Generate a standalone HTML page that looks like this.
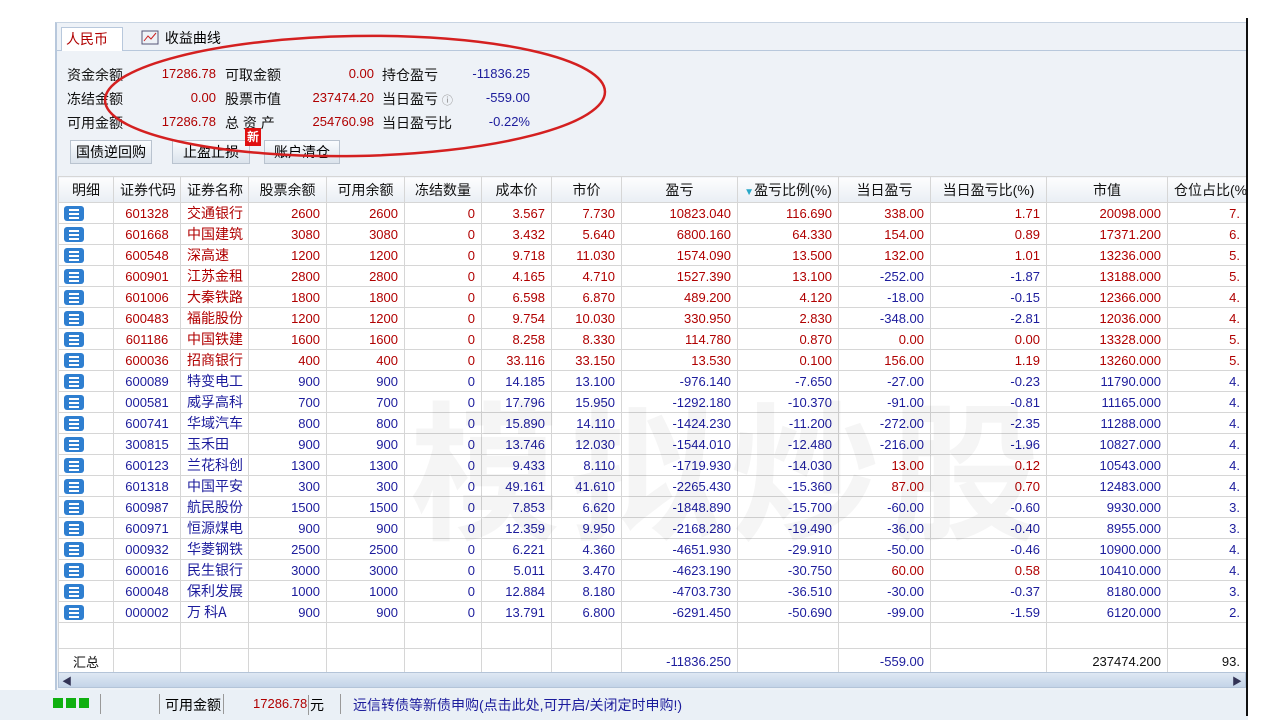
<!DOCTYPE html>
<html><head><meta charset="utf-8"><style>
*{margin:0;padding:0;box-sizing:border-box}
body{width:1280px;height:720px;background:#fff;position:relative;overflow:hidden;font-family:"Liberation Sans","Noto Sans CJK SC",sans-serif;font-size:13px}
#win{position:absolute;left:55px;top:22px;width:1192px;height:698px;background:#eef2f7;border-left:2px solid #b8c8dc;border-top:1px solid #c8d4e2}
#edge{position:absolute;left:1246px;top:18px;width:2px;height:698px;background:#111;z-index:5}
.tab{position:absolute;top:4px;height:24px;font-size:14px}
#tabs{position:absolute;left:0;top:0;width:1190px;height:28px;border-bottom:1px solid #b8c8dc}
.info{position:absolute;font-size:14px;color:#111}
.num{font-family:"Liberation Sans",sans-serif;font-size:13px;text-align:right}
.r{color:#b00000}.b{color:#1c1c9c}
.btn{position:absolute;height:24px;border:1px solid #b9c3cf;background:linear-gradient(#fafcfe,#dbe3ec);font-size:14px;text-align:center;line-height:22px}
table{position:absolute;left:58px;top:176px;border-collapse:collapse;table-layout:fixed;background:#fff;font-size:13px;width:1188px}
td,th{border:1px solid #d6d6d6;height:21px;padding:0 6px;white-space:nowrap;overflow:hidden;text-align:right;font-family:"Liberation Sans","Noto Sans CJK SC",sans-serif;font-size:13px}
th{height:26px;background:linear-gradient(#fdfdfe,#e9eef4);font-weight:normal;text-align:center;font-size:14px;color:#111}
td.c{text-align:center}td.n{text-align:left;font-family:"Noto Sans CJK SC",sans-serif;font-size:14px}
.ic{display:inline-block;width:20px;height:15px;background:#2f7fd0;border-radius:3px;vertical-align:middle;position:relative}
.ic:after{content:"";position:absolute;left:5px;top:3px;width:10px;height:2px;background:#fff;box-shadow:0 4px 0 #fff,0 8px 0 #fff}
td:first-child{text-align:left;padding-left:5px}
#wm{position:absolute;left:410px;top:355px;font-size:150px;color:rgba(0,0,0,0.04);font-family:"Noto Sans CJK SC",sans-serif;font-weight:bold;letter-spacing:10px}
#scroll{position:absolute;left:58px;top:672px;width:1188px;height:16px;background:linear-gradient(#dfe8f3,#c4d4e8);border:1px solid #b4c4d8}
#status{position:absolute;left:0;top:690px;width:1248px;height:30px;background:#eaf0f6;font-size:14px}
</style></head><body>
<div id="win">
 <div id="tabs"></div>
 <div class="tab r" style="left:4px;width:62px;border:1px solid #b8c8dc;border-bottom:none;background:#fff;padding-left:4px;line-height:22px">人民币</div>
 <div class="tab" style="left:84px;line-height:22px"><svg width="20" height="16" style="vertical-align:-3px"><rect x="1" y="1" width="16" height="13" fill="none" stroke="#557" /><path d="M3 11 L7 6 L10 9 L15 3" stroke="#c22" fill="none"/></svg> 收益曲线</div>
</div>
<div id="edge"></div>
<div class="info" style="left:67px;top:65px">资金余额</div><div class="info r num" style="left:150px;top:66px;width:66px">17286.78</div>
<div class="info" style="left:225px;top:65px">可取金额</div><div class="info r num" style="left:300px;top:66px;width:74px">0.00</div>
<div class="info" style="left:382px;top:65px">持仓盈亏</div><div class="info b num" style="left:450px;top:66px;width:80px">-11836.25</div>
<div class="info" style="left:67px;top:89px">冻结金额</div><div class="info r num" style="left:150px;top:90px;width:66px">0.00</div>
<div class="info" style="left:225px;top:89px">股票市值</div><div class="info r num" style="left:300px;top:90px;width:74px">237474.20</div>
<div class="info" style="left:382px;top:89px">当日盈亏 <span style="font-size:11px;color:#888">ⓘ</span></div><div class="info b num" style="left:450px;top:90px;width:80px">-559.00</div>
<div class="info" style="left:67px;top:113px">可用金额</div><div class="info r num" style="left:150px;top:114px;width:66px">17286.78</div>
<div class="info" style="left:225px;top:113px">总 资 产</div><div class="info r num" style="left:300px;top:114px;width:74px">254760.98</div>
<div class="info" style="left:382px;top:113px">当日盈亏比</div><div class="info b num" style="left:450px;top:114px;width:80px">-0.22%</div>
<div class="btn" style="left:70px;width:82px;top:140px">国债逆回购</div>
<div class="btn" style="left:172px;width:78px;top:140px">止盈止损</div>
<div class="btn" style="left:264px;width:76px;top:140px">账户清仓</div>
<div style="position:absolute;left:245px;top:128px;width:16px;height:18px;background:#e01010;color:#fff;font-size:12px;font-weight:bold;text-align:center;line-height:18px">新</div>
<svg style="position:absolute;left:0;top:0" width="1280" height="720"><ellipse cx="355" cy="96" rx="250" ry="60" fill="none" stroke="#d42020" stroke-width="2.5" transform="rotate(-1 355 96)"/></svg>
<table>
<colgroup><col style="width:55px"><col style="width:67px"><col style="width:68px"><col style="width:78px"><col style="width:78px"><col style="width:77px"><col style="width:70px"><col style="width:70px"><col style="width:116px"><col style="width:101px"><col style="width:92px"><col style="width:116px"><col style="width:121px"><col style="width:79px"></colgroup>
<tr><th>明细</th><th>证券代码</th><th>证券名称</th><th>股票余额</th><th>可用余额</th><th>冻结数量</th><th>成本价</th><th>市价</th><th>盈亏</th><th><span style="color:#2aa8c8;font-size:10px">▼</span>盈亏比例(%)</th><th>当日盈亏</th><th>当日盈亏比(%)</th><th>市值</th><th style="text-align:left">仓位占比(%</th></tr>
<tr class="r"><td><span class="ic"></span></td><td class="c">601328</td><td class="n">交通银行</td><td>2600</td><td>2600</td><td>0</td><td>3.567</td><td>7.730</td><td>10823.040</td><td>116.690</td><td>338.00</td><td>1.71</td><td>20098.000</td><td>7.</td></tr>
<tr class="r"><td><span class="ic"></span></td><td class="c">601668</td><td class="n">中国建筑</td><td>3080</td><td>3080</td><td>0</td><td>3.432</td><td>5.640</td><td>6800.160</td><td>64.330</td><td>154.00</td><td>0.89</td><td>17371.200</td><td>6.</td></tr>
<tr class="r"><td><span class="ic"></span></td><td class="c">600548</td><td class="n">深高速</td><td>1200</td><td>1200</td><td>0</td><td>9.718</td><td>11.030</td><td>1574.090</td><td>13.500</td><td>132.00</td><td>1.01</td><td>13236.000</td><td>5.</td></tr>
<tr class="r"><td><span class="ic"></span></td><td class="c">600901</td><td class="n">江苏金租</td><td>2800</td><td>2800</td><td>0</td><td>4.165</td><td>4.710</td><td>1527.390</td><td>13.100</td><td class="b">-252.00</td><td class="b">-1.87</td><td>13188.000</td><td>5.</td></tr>
<tr class="r"><td><span class="ic"></span></td><td class="c">601006</td><td class="n">大秦铁路</td><td>1800</td><td>1800</td><td>0</td><td>6.598</td><td>6.870</td><td>489.200</td><td>4.120</td><td class="b">-18.00</td><td class="b">-0.15</td><td>12366.000</td><td>4.</td></tr>
<tr class="r"><td><span class="ic"></span></td><td class="c">600483</td><td class="n">福能股份</td><td>1200</td><td>1200</td><td>0</td><td>9.754</td><td>10.030</td><td>330.950</td><td>2.830</td><td class="b">-348.00</td><td class="b">-2.81</td><td>12036.000</td><td>4.</td></tr>
<tr class="r"><td><span class="ic"></span></td><td class="c">601186</td><td class="n">中国铁建</td><td>1600</td><td>1600</td><td>0</td><td>8.258</td><td>8.330</td><td>114.780</td><td>0.870</td><td>0.00</td><td>0.00</td><td>13328.000</td><td>5.</td></tr>
<tr class="r"><td><span class="ic"></span></td><td class="c">600036</td><td class="n">招商银行</td><td>400</td><td>400</td><td>0</td><td>33.116</td><td>33.150</td><td>13.530</td><td>0.100</td><td>156.00</td><td>1.19</td><td>13260.000</td><td>5.</td></tr>
<tr class="b"><td><span class="ic"></span></td><td class="c">600089</td><td class="n">特变电工</td><td>900</td><td>900</td><td>0</td><td>14.185</td><td>13.100</td><td>-976.140</td><td>-7.650</td><td>-27.00</td><td>-0.23</td><td>11790.000</td><td>4.</td></tr>
<tr class="b"><td><span class="ic"></span></td><td class="c">000581</td><td class="n">威孚高科</td><td>700</td><td>700</td><td>0</td><td>17.796</td><td>15.950</td><td>-1292.180</td><td>-10.370</td><td>-91.00</td><td>-0.81</td><td>11165.000</td><td>4.</td></tr>
<tr class="b"><td><span class="ic"></span></td><td class="c">600741</td><td class="n">华域汽车</td><td>800</td><td>800</td><td>0</td><td>15.890</td><td>14.110</td><td>-1424.230</td><td>-11.200</td><td>-272.00</td><td>-2.35</td><td>11288.000</td><td>4.</td></tr>
<tr class="b"><td><span class="ic"></span></td><td class="c">300815</td><td class="n">玉禾田</td><td>900</td><td>900</td><td>0</td><td>13.746</td><td>12.030</td><td>-1544.010</td><td>-12.480</td><td>-216.00</td><td>-1.96</td><td>10827.000</td><td>4.</td></tr>
<tr class="b"><td><span class="ic"></span></td><td class="c">600123</td><td class="n">兰花科创</td><td>1300</td><td>1300</td><td>0</td><td>9.433</td><td>8.110</td><td>-1719.930</td><td>-14.030</td><td class="r">13.00</td><td class="r">0.12</td><td>10543.000</td><td>4.</td></tr>
<tr class="b"><td><span class="ic"></span></td><td class="c">601318</td><td class="n">中国平安</td><td>300</td><td>300</td><td>0</td><td>49.161</td><td>41.610</td><td>-2265.430</td><td>-15.360</td><td class="r">87.00</td><td class="r">0.70</td><td>12483.000</td><td>4.</td></tr>
<tr class="b"><td><span class="ic"></span></td><td class="c">600987</td><td class="n">航民股份</td><td>1500</td><td>1500</td><td>0</td><td>7.853</td><td>6.620</td><td>-1848.890</td><td>-15.700</td><td>-60.00</td><td>-0.60</td><td>9930.000</td><td>3.</td></tr>
<tr class="b"><td><span class="ic"></span></td><td class="c">600971</td><td class="n">恒源煤电</td><td>900</td><td>900</td><td>0</td><td>12.359</td><td>9.950</td><td>-2168.280</td><td>-19.490</td><td>-36.00</td><td>-0.40</td><td>8955.000</td><td>3.</td></tr>
<tr class="b"><td><span class="ic"></span></td><td class="c">000932</td><td class="n">华菱钢铁</td><td>2500</td><td>2500</td><td>0</td><td>6.221</td><td>4.360</td><td>-4651.930</td><td>-29.910</td><td>-50.00</td><td>-0.46</td><td>10900.000</td><td>4.</td></tr>
<tr class="b"><td><span class="ic"></span></td><td class="c">600016</td><td class="n">民生银行</td><td>3000</td><td>3000</td><td>0</td><td>5.011</td><td>3.470</td><td>-4623.190</td><td>-30.750</td><td class="r">60.00</td><td class="r">0.58</td><td>10410.000</td><td>4.</td></tr>
<tr class="b"><td><span class="ic"></span></td><td class="c">600048</td><td class="n">保利发展</td><td>1000</td><td>1000</td><td>0</td><td>12.884</td><td>8.180</td><td>-4703.730</td><td>-36.510</td><td>-30.00</td><td>-0.37</td><td>8180.000</td><td>3.</td></tr>
<tr class="b"><td><span class="ic"></span></td><td class="c">000002</td><td class="n">万 科A</td><td>900</td><td>900</td><td>0</td><td>13.791</td><td>6.800</td><td>-6291.450</td><td>-50.690</td><td>-99.00</td><td>-1.59</td><td>6120.000</td><td>2.</td></tr>
<tr><td style="height:26px"></td><td></td><td></td><td></td><td></td><td></td><td></td><td></td><td></td><td></td><td></td><td></td><td></td><td></td></tr>
<tr style="color:#111"><td style="height:25px;font-family:'Noto Sans CJK SC',sans-serif;padding-left:14px">汇总</td><td></td><td></td><td></td><td></td><td></td><td></td><td></td><td class="b">-11836.250</td><td></td><td class="b">-559.00</td><td></td><td>237474.200</td><td>93.</td></tr>
</table>
<div id="wm">模拟炒股</div>
<div id="scroll"><span style="position:absolute;left:3px;top:0;font-size:10px;color:#335">◀</span><span style="position:absolute;right:3px;top:0;font-size:10px;color:#335">▶</span></div>
<div id="status">
 <div style="position:absolute;left:53px;top:8px;width:10px;height:10px;background:#10b010;box-shadow:13px 0 0 #10b010,26px 0 0 #10b010"></div>
 <div style="position:absolute;left:100px;top:4px;height:20px;border-left:1px solid #999"></div>
 <div style="position:absolute;left:159px;top:4px;height:20px;border-left:1px solid #999"></div>
 <div style="position:absolute;left:165px;top:5px">可用金额</div>
 <div style="position:absolute;left:223px;top:4px;height:20px;border-left:1px solid #999"></div>
 <div class="r" style="position:absolute;left:253px;top:6px;font-size:13px">17286.78</div>
 <div style="position:absolute;left:308px;top:5px;border-left:1px solid #999;padding-left:1px">元</div>
 <div style="position:absolute;left:340px;top:4px;height:20px;border-left:1px solid #999"></div>
 <div class="b" style="position:absolute;left:353px;top:5px">远信转债等新债申购(点击此处,可开启/关闭定时申购!)</div>
</div>
</body></html>
